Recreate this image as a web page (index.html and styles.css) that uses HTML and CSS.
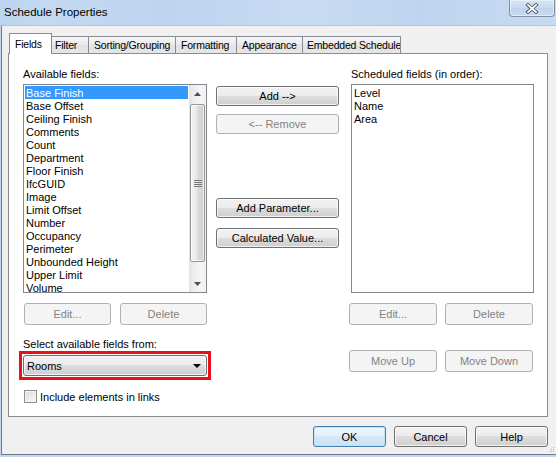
FILE: index.html
```html
<!DOCTYPE html>
<html>
<head>
<meta charset="utf-8">
<title>Schedule Properties</title>
<link rel="stylesheet" href="styles.css">
</head>
<body>
<div class="window">
  <div class="titlebar">
    <span class="title">Schedule Properties</span>
    <div class="close">
      <svg width="14" height="11" viewBox="0 0 14 11">
        <path d="M3 2 L11 9 M11 2 L3 9" stroke="#4f5866" stroke-width="3.6" stroke-linecap="square" fill="none"/>
        <path d="M3 2 L11 9 M11 2 L3 9" stroke="#ffffff" stroke-width="1.7" stroke-linecap="square" fill="none"/>
      </svg>
    </div>
  </div>
  <div class="client">
    <div class="tabs">
      <div class="tab active t-fields">Fields</div>
      <div class="tab t-filter">Filter</div>
      <div class="tab t-sort">Sorting/Grouping</div>
      <div class="tab t-format">Formatting</div>
      <div class="tab t-appear">Appearance</div>
      <div class="tab t-embed">Embedded Schedule</div>
    </div>
    <div class="panel">
      <div class="col col-left">
        <div class="label">Available fields:</div>
        <div class="listbox">
          <div class="items">
            <div class="item sel">Base Finish</div>
            <div class="item">Base Offset</div>
            <div class="item">Ceiling Finish</div>
            <div class="item">Comments</div>
            <div class="item">Count</div>
            <div class="item">Department</div>
            <div class="item">Floor Finish</div>
            <div class="item">IfcGUID</div>
            <div class="item">Image</div>
            <div class="item">Limit Offset</div>
            <div class="item">Number</div>
            <div class="item">Occupancy</div>
            <div class="item">Perimeter</div>
            <div class="item">Unbounded Height</div>
            <div class="item">Upper Limit</div>
            <div class="item">Volume</div>
          </div>
          <div class="vscroll">
            <div class="sb-btn">
              <svg width="7" height="4" viewBox="0 0 7 4"><path d="M0 4 L3.5 0 L7 4 Z" fill="#4d4d4d"/></svg>
            </div>
            <div class="thumb">
              <svg width="8" height="7" viewBox="0 0 8 7">
                <path d="M0 0.5 H8 M0 2.5 H8 M0 4.5 H8 M0 6.5 H8" stroke="#7a7a7a" stroke-width="1"/>
              </svg>
            </div>
            <div class="sb-btn sb-down">
              <svg width="7" height="4" viewBox="0 0 7 4"><path d="M0 0 L3.5 4 L7 0 Z" fill="#4d4d4d"/></svg>
            </div>
          </div>
        </div>
        <div class="btnrow">
          <button class="btn disabled w87">Edit...</button>
          <button class="btn disabled w87">Delete</button>
        </div>
        <div class="label label-select">Select available fields from:</div>
        <div class="highlight">
          <div class="combo">
            <span>Rooms</span>
            <svg width="8" height="4" viewBox="0 0 8 4"><path d="M0 0 H8 L4 4 Z" fill="#000"/></svg>
          </div>
        </div>
        <div class="check">
          <span class="box"></span>
          <span>Include elements in links</span>
        </div>
      </div>

      <div class="col col-mid">
        <button class="btn mid b-add">Add --&gt;</button>
        <button class="btn mid disabled b-remove">&lt;-- Remove</button>
        <button class="btn mid b-param">Add Parameter...</button>
        <button class="btn mid b-calc">Calculated Value...</button>
      </div>

      <div class="col col-right">
        <div class="label">Scheduled fields (in order):</div>
        <div class="listbox">
          <div class="items">
            <div class="item">Level</div>
            <div class="item">Name</div>
            <div class="item">Area</div>
          </div>
        </div>
        <div class="btnrow btnrow-right">
          <button class="btn disabled w88">Edit...</button>
          <button class="btn disabled w88">Delete</button>
        </div>
        <div class="btnrow btnrow-right btnrow-move">
          <button class="btn disabled w88">Move Up</button>
          <button class="btn disabled w88">Move Down</button>
        </div>
      </div>
    </div>
    <div class="footer">
      <button class="btn dlg default">OK</button>
      <button class="btn dlg">Cancel</button>
      <button class="btn dlg">Help</button>
    </div>
    <svg class="sizegrip" width="6" height="6" viewBox="0 0 6 6">
      <rect x="4" y="0" width="1" height="1" fill="#b0b0b0"/>
      <rect x="2" y="2" width="1" height="1" fill="#b0b0b0"/>
      <rect x="4" y="2" width="1" height="1" fill="#b0b0b0"/>
      <rect x="0" y="4" width="1" height="1" fill="#b0b0b0"/>
      <rect x="2" y="4" width="1" height="1" fill="#b0b0b0"/>
      <rect x="4" y="4" width="1" height="1" fill="#b0b0b0"/>
    </svg>
  </div>
</div>
</body>
</html>
```

FILE: styles.css
```css
* { box-sizing: border-box; }
html, body { margin: 0; padding: 0; }
body {
  width: 556px;
  height: 457px;
  overflow: hidden;
  background: #c2d7f0;
  font-family: "Liberation Sans", Arial, sans-serif;
  font-size: 11px;
  color: #000;
}

.titlebar {
  height: 25px;
  display: flex;
  align-items: flex-start;
  background: linear-gradient(to right, #bcd3ee 0%, #c4d9f1 8%, #bed4ef 30%, #c7dbf2 55%, #bfd5ef 75%, #c6daf2 100%);
}
.title {
  font-size: 11.5px;
  line-height: 25px;
  padding-left: 4px;
  color: #000;
}
.close {
  margin-left: auto;
  margin-right: 1px;
  width: 46px;
  height: 17px;
  border: 1px solid #8190a5;
  border-top: none;
  border-radius: 0 0 4px 4px;
  background: linear-gradient(#d6e4f5, #c9dbf1 50%, #bfd3ec 50%, #c8daf0);
  box-shadow: inset 0 0 0 1px rgba(255,255,255,0.45);
  display: flex;
  align-items: center;
  justify-content: center;
}

.client {
  position: relative;
  margin-left: 1px;
  height: 430px;
  background: #f0f0f0;
  border-left: 1px solid #6c7989;
  border-top: 1px solid #b6c4d5;
  border-bottom: 1px solid #6c7989;
  padding-top: 7px;
  display: flex;
  flex-direction: column;
}

.tabs {
  display: flex;
  align-items: flex-end;
  height: 21px;
  margin: 0 0 -1px 7px;
  position: relative;
  z-index: 1;
}
.tab {
  height: 17px;
  margin-bottom: 1px;
  border: 1px solid #898c95;
  border-left: none;
  border-bottom: none;
  background: linear-gradient(#f6f6f6, #e9e9e9 50%, #e2e2e2 50%, #e6e6e6);
  font-size: 10.5px;
  letter-spacing: -0.2px;
  line-height: 17px;
  padding-left: 5px;
  white-space: nowrap;
  overflow: hidden;
}
.tab.active {
  height: 21px;
  margin-bottom: 0;
  border-left: 1px solid #898c95;
  background: #fff;
  line-height: 20px;
  padding-left: 5px;
}
.t-fields { width: 43px; }
.t-filter { width: 37px; padding-left: 3px; }
.t-sort { width: 87px; }
.t-format { width: 61px; }
.t-appear { width: 66px; }
.t-embed { width: 98px; padding-left: 4px; }

.panel {
  height: 364px;
  margin: 0 8px 0 6px;
  background: #fff;
  border: 1px solid #898c95;
  display: flex;
  padding: 13px 0 0 14px;
}
.col { display: flex; flex-direction: column; }
.col-left { width: 184px; }
.col-mid { width: 123px; margin-left: 9px; }
.col-right { width: 183px; margin-left: 12px; }

.label {
  height: 13px;
  line-height: 14px;
  white-space: nowrap;
}
.label-select { margin-top: 12px; }

.listbox {
  margin-top: 4px;
  height: 209px;
  border: 1px solid #828790;
  background: #fff;
  display: flex;
}
.items {
  flex: 1;
  padding: 1px;
  overflow: hidden;
}
.item {
  height: 13px;
  line-height: 14px;
  padding-left: 1px;
  white-space: nowrap;
}
.item.sel { background: #3399ff; color: #fff; }

.vscroll {
  width: 17px;
  display: flex;
  flex-direction: column;
  background: linear-gradient(to right, #e3e3e3, #eeeeee 30%, #f6f6f6 70%, #f1f1f1);
}
.sb-btn {
  height: 17px;
  display: flex;
  align-items: center;
  justify-content: center;
}
.sb-down { margin-top: auto; }
.thumb {
  margin: 2px 1px 0 1px;
  height: 158px;
  border: 1px solid #979797;
  border-radius: 2px;
  background: linear-gradient(to right, #f4f4f4, #e8e8e8 45%, #d9d9d9 55%, #d2d2d2);
  box-shadow: inset 0 0 0 1px rgba(255,255,255,0.6);
  display: flex;
  align-items: center;
  justify-content: center;
}

.btn {
  font-family: inherit;
  font-size: 11px;
  color: #000;
  padding: 0;
  margin: 0;
  border: 1px solid #707070;
  border-radius: 3px;
  background: linear-gradient(#f2f2f2, #ebebeb 50%, #dddddd 50%, #cfcfcf);
  box-shadow: inset 0 0 0 1px rgba(255,255,255,0.7);
  display: flex;
  align-items: center;
  justify-content: center;
  white-space: nowrap;
}
.btn.disabled {
  border-color: #adb2b5;
  background: #f4f4f4;
  color: #838383;
  box-shadow: none;
}
.btnrow {
  margin-top: 10px;
  display: flex;
  gap: 9px;
  padding-left: 1px;
}
.btnrow .btn { height: 22px; }
.w87 { width: 87px; }
.w88 { width: 88px; }
.btnrow-right { margin-left: -3px; gap: 8px; }
.btnrow-move { margin-top: 25px; }

.mid { width: 123px; height: 20px; }
.b-add { margin-top: 19px; }
.b-remove { margin-top: 8px; }
.b-param { margin-top: 64px; }
.b-calc { margin-top: 10px; }

.highlight {
  margin: 1px -4px 0 -4px;
  width: 192px;
  border: 3px solid #e8101a;
  padding: 1px;
}
.combo {
  height: 21px;
  border: 1px solid #707070;
  border-radius: 3px;
  background: linear-gradient(#f2f2f2, #ebebeb 50%, #dddddd 50%, #cfcfcf);
  box-shadow: inset 0 0 0 1px rgba(255,255,255,0.7);
  display: flex;
  align-items: center;
  justify-content: space-between;
  padding: 0 5px 0 3px;
}

.check {
  margin-top: 10px;
  display: flex;
  align-items: center;
  height: 13px;
  padding-left: 1px;
}
.box {
  width: 13px;
  height: 13px;
  border: 1px solid #8e8f8f;
  background: linear-gradient(135deg, #dcdcdc, #f8f8f8);
  box-shadow: inset 0 0 0 1px #f4f4f4;
  margin-right: 3px;
}

.footer {
  margin-top: 9px;
  display: flex;
  justify-content: flex-end;
  gap: 8px;
  padding-right: 8px;
}
.dlg { width: 73px; height: 21px; }
.dlg.default {
  border-color: #3c7fb1;
  background: linear-gradient(#eef6fc, #e2eff9 50%, #d4e7f6 50%, #cde2f3);
  box-shadow: inset 0 0 0 1px #bfe3f8;
}

.sizegrip {
  position: absolute;
  right: 1px;
  bottom: 1px;
}
```
